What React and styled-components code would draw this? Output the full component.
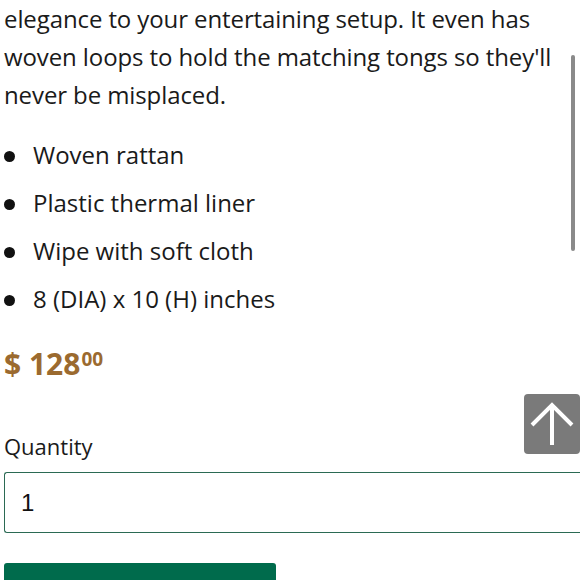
import React from "react";
import styled, { createGlobalStyle } from "styled-components";

const Global = createGlobalStyle`
  html, body { margin: 0; padding: 0; background: #fff; overflow: hidden; }
  body { font-family: "Open Sans", "Noto Sans", sans-serif; color: #1a1a1a; }
`;

const Page = styled.div`
  position: relative;
  width: 580px;
  height: 580px;
  overflow: hidden;
`;

const Content = styled.div`
  padding: 0 0 0 4px;
`;

const Paragraph = styled.p`
  margin: 0;
  font-size: 24px;
  line-height: 38px;
  letter-spacing: -0.1px;
`;

const List = styled.ul`
  margin: 17px 0 0 0;
  padding: 0;
  list-style: none;
`;

const Item = styled.li`
  display: flex;
  align-items: center;
  font-size: 24px;
  line-height: 48px;
  &::before {
    content: "";
    width: 11px;
    height: 11px;
    border-radius: 50%;
    background: #111;
    margin: 3px 18px 0 0;
    flex: none;
  }
`;

const Price = styled.div`
  margin-top: 21px;
  font-size: 30px;
  line-height: 40px;
  font-weight: 700;
  color: #9b6a2f;
  display: flex;
  align-items: flex-start;
`;

const Cents = styled.span`
  font-size: 19px;
  line-height: 19px;
  margin-top: 6px;
  margin-left: 1px;
`;

const Label = styled.div`
  margin-top: 47px;
  font-size: 22px;
  line-height: 30px;
`;

const QtyBox = styled.div`
  margin-top: 11px;
  height: 59px;
  border: 1px solid #2b6a54;
  border-right: none;
  border-radius: 3px 0 0 3px;
  display: flex;
  align-items: center;
  padding-left: 16px;
  font-family: "Liberation Sans", Arial, sans-serif;
  font-size: 24px;
  color: #111;
`;

const AddButton = styled.div`
  margin-top: 30px;
  width: 272px;
  height: 40px;
  background: #006b4c;
  border-radius: 3px;
`;

const TopButton = styled.div`
  position: absolute;
  left: 524px;
  top: 394px;
  width: 56px;
  height: 60px;
  background: #7a7a7a;
  border-radius: 4px;
  display: flex;
  align-items: center;
  justify-content: center;
`;

const Scrollbar = styled.div`
  position: absolute;
  left: 571px;
  top: 55px;
  width: 4px;
  height: 196px;
  border-radius: 2px;
  background: #8a8a8a;
`;

export default function App() {
  return (
    <Page>
      <Global />
      <Content>
        <Paragraph>
          elegance to your entertaining setup. It even has woven loops to hold the matching tongs so they'll never be misplaced.
        </Paragraph>
        <List>
          <Item>Woven rattan</Item>
          <Item>Plastic thermal liner</Item>
          <Item>Wipe with soft cloth</Item>
          <Item>8 (DIA) x 10 (H) inches</Item>
        </List>
        <Price>
          $ 128<Cents>00</Cents>
        </Price>
        <Label>Quantity</Label>
        <QtyBox>1</QtyBox>
        <AddButton />
      </Content>
      <TopButton>
        <svg width="44" height="44" viewBox="0 0 44 44" fill="none" stroke="#fff" strokeWidth="4" strokeLinecap="butt" strokeLinejoin="miter">
          <path d="M22 43V4" />
          <path d="M2 23L22 3L42 23" />
        </svg>
      </TopButton>
      <Scrollbar />
    </Page>
  );
}
